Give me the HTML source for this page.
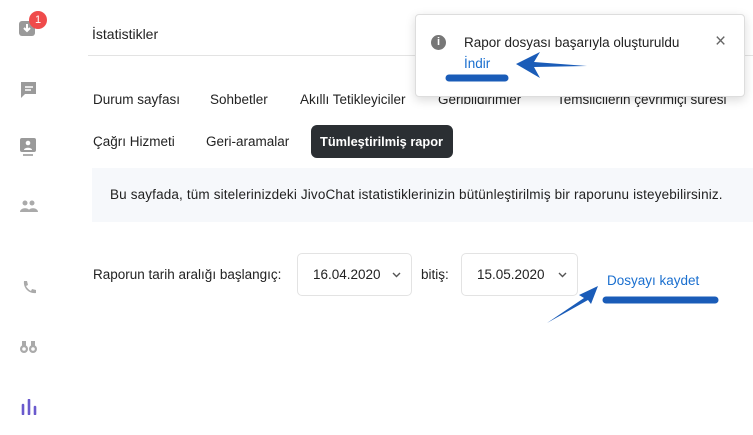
<!DOCTYPE html>
<html><head><meta charset="utf-8"><style>
*{margin:0;padding:0;box-sizing:border-box}
body{width:753px;height:435px;background:#fff;font-family:"Liberation Sans",sans-serif;color:#222;position:relative;overflow:hidden;font-size:13.5px}
.a{position:absolute;white-space:nowrap}
.sel{position:absolute;border:1px solid #e3e3e3;border-radius:5px;height:43px;padding:13px 0 0 15px}
.chev{position:absolute;right:10px;top:18px}
</style></head><body>
<svg class="a" style="left:18px;top:18px" width="20" height="20"><rect x="1" y="3" width="16" height="15" rx="3" fill="#9a9a9a"/><path d="M9 6v7M6 10l3 3 3-3" stroke="#fff" stroke-width="2" fill="none"/></svg>
<div class="a" style="left:29px;top:11px;width:18px;height:18px;border-radius:9px;background:#ef4b4b;color:#fff;font-size:11px;text-align:center;line-height:18px">1</div>
<svg class="a" style="left:20px;top:81px" width="18" height="18"><path d="M1 1h15v12H5l-4 4z" fill="#9a9a9a"/><path d="M5 6h8M5 9h6" stroke="#fff" stroke-width="1.6"/></svg>
<svg class="a" style="left:19px;top:137px" width="20" height="22"><rect x="1" y="1" width="16" height="14" rx="2" fill="#9a9a9a"/><circle cx="9" cy="6" r="2.3" fill="#fff"/><path d="M5 13c0-3 8-3 8 0z" fill="#fff"/><path d="M4 18h10" stroke="#9a9a9a" stroke-width="1.6"/></svg>
<svg class="a" style="left:19px;top:199px" width="20" height="16"><circle cx="6" cy="4" r="2.5" fill="#aaa"/><circle cx="13" cy="4" r="2.5" fill="#aaa"/><path d="M1 13c0-5 10-5 10 0zM9 13c0-5 10-5 10 0z" fill="#aaa"/></svg>
<svg class="a" style="left:21px;top:280px" width="16" height="16"><path d="M3 1l3 0 1 4-2 1c1 2 3 4 5 5l1-2 4 1v3c-7 1-13-5-12-12z" fill="#aaa"/></svg>
<svg class="a" style="left:19px;top:340px" width="20" height="14"><circle cx="5" cy="9" r="4" fill="#aaa"/><circle cx="14" cy="9" r="4" fill="#aaa"/><rect x="3" y="1" width="4" height="6" fill="#aaa"/><rect x="12" y="1" width="4" height="6" fill="#aaa"/><circle cx="5" cy="9" r="1.8" fill="#fff"/><circle cx="14" cy="9" r="1.8" fill="#fff"/></svg>
<svg class="a" style="left:20px;top:399px" width="18" height="16"><path d="M3 6v9M9 1v14M15 8v7" stroke="#6a5acd" stroke-width="2.6" stroke-linecap="round"/></svg>
<div class="a" style="left:92px;top:26px;font-size:14px">İstatistikler</div>
<div class="a" style="left:88px;top:55px;width:665px;height:1px;background:#e3e3e3"></div>
<div class="a" style="left:93px;top:92px">Durum sayfası</div>
<div class="a" style="left:210px;top:92px">Sohbetler</div>
<div class="a" style="left:300px;top:92px">Akıllı Tetikleyiciler</div>
<div class="a" style="left:438px;top:92px">Geribildirimler</div>
<div class="a" style="left:557px;top:92px">Temsilcilerin çevrimiçi süresi</div>
<div class="a" style="left:93px;top:134px">Çağrı Hizmeti</div>
<div class="a" style="left:206px;top:134px">Geri-aramalar</div>
<div class="a" style="left:311px;top:125px;width:142px;height:33px;background:#2b2f33;border-radius:6px;color:#fff;font-weight:bold;font-size:12.8px;padding:9px 0 0 9px">Tümleştirilmiş rapor</div>
<div class="a" style="left:92px;top:168px;width:661px;height:54px;background:#f6f8fb;padding:19px 0 0 18px;letter-spacing:0.15px">Bu sayfada, tüm sitelerinizdeki JivoChat istatistiklerinizin bütünleştirilmiş bir raporunu isteyebilirsiniz.</div>
<div class="a" style="left:93px;top:267px">Raporun tarih aralığı başlangıç:</div>
<div class="sel" style="left:297px;top:253px;width:115px">16.04.2020<svg class="chev" width="9" height="6"><path d="M1 1l3.5 3.5L8 1" stroke="#555" stroke-width="1.4" fill="none"/></svg></div>
<div class="a" style="left:421px;top:267px">bitiş:</div>
<div class="sel" style="left:461px;top:253px;width:117px">15.05.2020<svg class="chev" width="9" height="6"><path d="M1 1l3.5 3.5L8 1" stroke="#555" stroke-width="1.4" fill="none"/></svg></div>
<div class="a" style="left:607px;top:273px;color:#1a6fcf">Dosyayı kaydet</div>
<div class="a" style="left:415px;top:14px;width:330px;height:83px;background:#fff;border:1px solid #ddd;border-radius:4px;box-shadow:0 3px 10px rgba(0,0,0,.15)"></div>
<div class="a" style="left:431px;top:35px;width:15px;height:15px;border-radius:8px;background:#777;color:#fff;font-size:11px;font-weight:bold;text-align:center;line-height:15px">i</div>
<div class="a" style="left:464px;top:35px">Rapor dosyası başarıyla oluşturuldu</div>
<div class="a" style="left:464px;top:56px;color:#1a6fcf">İndir</div>
<div class="a" style="left:715px;top:31px;font-size:19px;color:#666">×</div>
<svg class="a" style="left:0;top:0" width="753" height="435">
<path d="M449 78H505" stroke="#1a5cb8" stroke-width="7" stroke-linecap="round"/>
<path d="M516 64L540 52L534 62L587 66L534 67L540 78Z" fill="#1a5cb8"/>
<path d="M606 300H715" stroke="#1a5cb8" stroke-width="7" stroke-linecap="round"/>
<path d="M547 323L584 298L579 295L598 286L591 304L588 300Z" fill="#1a5cb8"/>
</svg>
</body></html>
